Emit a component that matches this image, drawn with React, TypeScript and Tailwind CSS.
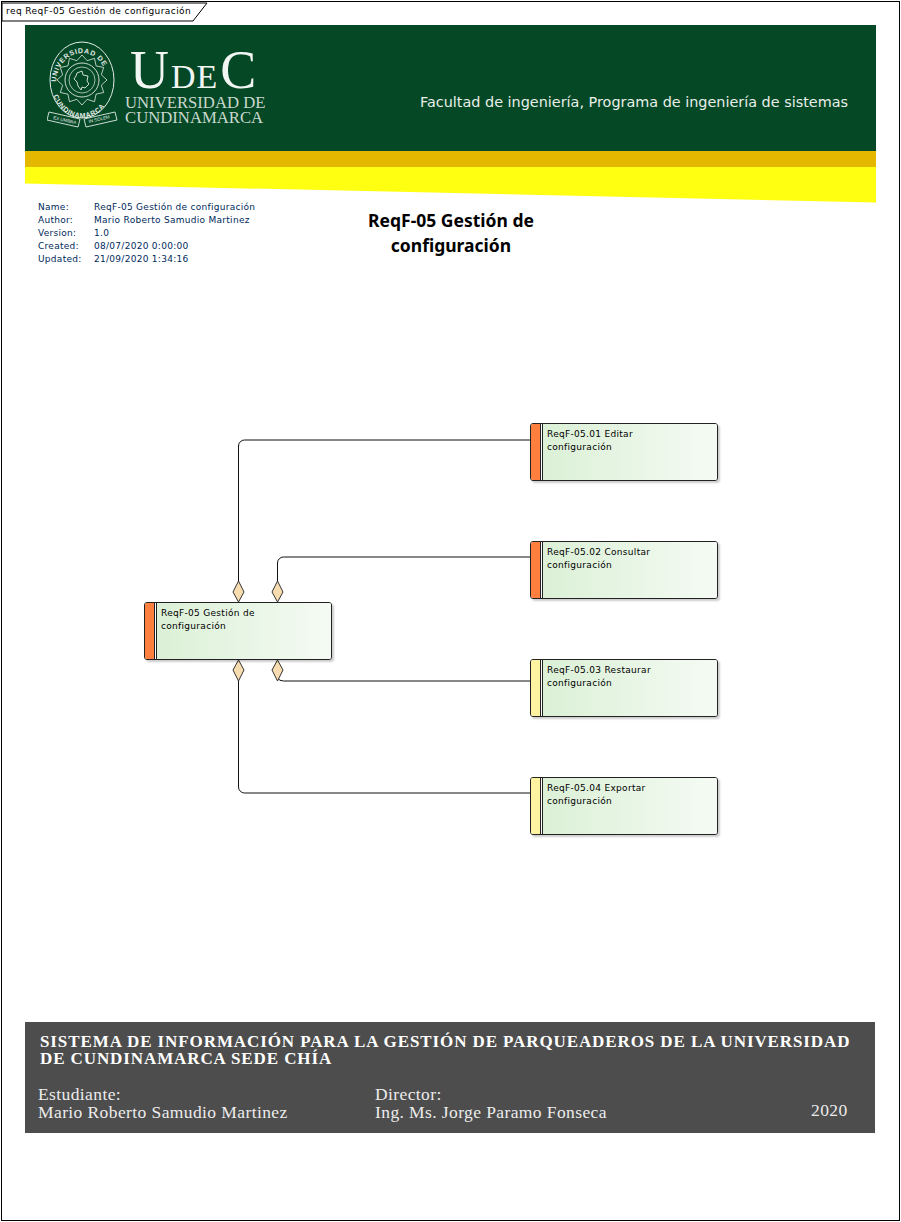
const uiFont = "font-['DejaVu_Sans',sans-serif]";

const requirements = [
  { id: "ReqF-05.01 Editar", strip: "bg-[#ff7f3f]", top: "top-[153px]" },
  { id: "ReqF-05.02 Consultar", strip: "bg-[#ff7f3f]", top: "top-[271px]" },
  { id: "ReqF-05.03 Restaurar", strip: "bg-[#fff3a0]", top: "top-[389px]" },
  { id: "ReqF-05.04 Exportar", strip: "bg-[#fff3a0]", top: "top-[507px]" },
];

const meta = [
  ["Name:", "ReqF-05 Gestión de configuración"],
  ["Author:", "Mario Roberto Samudio Martinez"],
  ["Version:", "1.0"],
  ["Created:", "08/07/2020 0:00:00"],
  ["Updated:", "21/09/2020 1:34:16"],
];

function Seal() {
  const teeth = Array.from({ length: 24 }, (_, i) => {
    const a = (i * Math.PI) / 12;
    const r = i % 2 === 0 ? 25 : 20;
    return `${(35 + r * Math.cos(a)).toFixed(1)},${(40 + r * Math.sin(a)).toFixed(1)}`;
  }).join(" ");
  return (
    <svg width="72" height="96" viewBox="0 0 72 96" className="shrink-0" fill="none" stroke="#e2ebe5">
      <ellipse cx="35" cy="40" rx="32" ry="38" strokeWidth="1" />
      <polygon points={teeth} strokeWidth="0.8" />
      <ellipse cx="35" cy="40" rx="17" ry="17" strokeWidth="0.9" />
      <ellipse cx="35" cy="40" rx="13" ry="13" strokeWidth="0.7" />
      <path d="M30 33l5-2 1 4 5 1-1 5 2 3-4 4-3-1-1 3-3-4-1-4-3-3 2-3z" strokeWidth="0.9" />
      <path id="sealTop" d="M9 44A26 31 0 0 1 61 44" stroke="none" />
      <path id="sealBottom" d="M4 42A31 36 0 0 0 66 42" stroke="none" />
      <text fill="#e2ebe5" stroke="none" fontSize="7" fontWeight="700" fontFamily="Liberation Sans" letterSpacing="0.7">
        <textPath href="#sealTop" startOffset="2">UNIVERSIDAD DE</textPath>
      </text>
      <text fill="#e2ebe5" stroke="none" fontSize="7" fontWeight="700" fontFamily="Liberation Sans" letterSpacing="0.6">
        <textPath href="#sealBottom" startOffset="14">CUNDINAMARCA</textPath>
      </text>
      <polygon points="2,72 33,79 31,87 0,80" fill="#044826" strokeWidth="0.9" />
      <polygon points="37,79 68,72 70,80 39,87" fill="#044826" strokeWidth="0.9" />
      <text x="6" y="79" fill="#e2ebe5" stroke="none" fontSize="4.5" fontFamily="Liberation Sans" transform="rotate(13 6 79)">EX UMBRA</text>
      <text x="42" y="83" fill="#e2ebe5" stroke="none" fontSize="4.5" fontFamily="Liberation Sans" transform="rotate(-13 42 83)">IN SOLEM</text>
    </svg>
  );
}

function Node({ title, strip, className }: { title: string; strip: string; className: string }) {
  return (
    <div className={`absolute flex h-[58px] w-[188px] overflow-hidden rounded-[3px] border border-[#222] bg-white shadow-[2px_2px_2px_rgba(0,0,0,0.2)] ${className}`}>
      <div className={`w-[9px] shrink-0 ${strip}`} />
      <div className="w-[3px] shrink-0 border-x border-[#222] bg-white" />
      <div className={`flex-1 bg-gradient-to-r from-[#dbf0d6] to-[#f5fbf4] pl-1 pt-1 text-[9px] leading-[13px] tracking-[0.3px] text-black ${uiFont}`}>
        <div>{title}</div>
        <div>configuración</div>
      </div>
    </div>
  );
}

function Connectors() {
  const diamonds = [
    "236.5,311 242,322 236.5,332 231,322",
    "275.5,311 281,322 275.5,332 270,322",
    "236.5,390 242,400 236.5,411 231,400",
    "275.5,390 281,400 275.5,411 270,400",
  ];
  return (
    <svg className="absolute left-0 top-0" width="897" height="750" fill="none" stroke="#111" strokeWidth="1">
      <path d="M236.5 311V176a6 6 0 0 1 6-6H530" />
      <path d="M275.5 311V293a6 6 0 0 1 6-6H530" />
      <path d="M275.5 408q2 3 6 3H530" />
      <path d="M236.5 411V517a6 6 0 0 0 6 6H530" />
      {diamonds.map((points) => (
        <polygon key={points} points={points} fill="#f7dcb0" stroke="#333" />
      ))}
    </svg>
  );
}

export default function App() {
  return (
    <div className="relative h-[1222px] w-[901px] bg-white">
      <div className="ml-px mt-px flex h-[1220px] w-[899px] flex-col border border-black pl-[23px] pt-[23px]">
        <header className="w-[851px]">
          <div className="flex h-[126px] items-start bg-[#044826] pl-[22px] pt-[15px]">
            <Seal />
            <div className="ml-[6px] flex flex-col items-start font-['Liberation_Serif',serif] text-[#c9d8ce]">
              <div className="ml-[5px] mt-[10px] flex items-baseline text-[54px] leading-[40px] text-[#f2f6f3]">
                U<span className="mx-[2px] text-[34px] leading-[36px] tracking-[1px]">DE</span>C
              </div>
              <div className="whitespace-nowrap text-[16.7px] leading-[15px]">
                UNIVERSIDAD DE
                <br />
                CUNDINAMARCA
              </div>
            </div>
            <div className={`ml-auto mr-[28px] mt-[52px] text-[14.4px] text-[#e8efe9] ${uiFont}`}>
              Facultad de ingeniería, Programa de ingeniería de sistemas
            </div>
          </div>
          <div className="h-[16px] bg-[#e5b800]" />
          <svg width="851" height="36" className="block">
            <polygon points="0,0 851,0 851,35.5 0,16.5" fill="#ffff12" />
          </svg>
        </header>

        <div className="flex h-[67px] items-start">
          <div className={`mt-[-2px] w-[260px] pl-[13px] text-[9px] leading-[12.9px] tracking-[0.28px] text-[#002a5c] ${uiFont}`}>
            {meta.map(([label, value]) => (
              <div key={label} className="flex">
                <span className="w-[56px] shrink-0">{label}</span>
                <span>{value}</span>
              </div>
            ))}
          </div>
          <h1 className="ml-[63px] mt-[5px] w-[206px] text-center font-['Noto_Sans',sans-serif] text-[17.5px] font-bold leading-[25px] text-black">
            ReqF-05 Gestión de configuración
          </h1>
        </div>

        <div className="relative ml-[-23px] h-[752px] shrink-0">
          <Connectors />
          <Node title="ReqF-05 Gestión de" strip="bg-[#ff7f3f]" className="left-[142px] top-[332px]" />
          {requirements.map((r) => (
            <Node key={r.id} title={r.id} strip={r.strip} className={`left-[528px] ${r.top}`} />
          ))}
        </div>

        <footer className="h-[111px] w-[850px] shrink-0 bg-[#4d4d4d] font-['Liberation_Serif',serif] text-[#ececec]">
          <div className="whitespace-nowrap pl-[15px] pt-[11px] text-[17px] font-bold leading-[17px] tracking-[0.9px] text-white">
            SISTEMA DE INFORMACIÓN PARA LA GESTIÓN DE PARQUEADEROS DE LA UNIVERSIDAD
            <br />
            DE CUNDINAMARCA SEDE CHÍA
          </div>
          <div className="mt-[18px] flex items-end pl-[13px] text-[17.5px] leading-[18px] tracking-[0.4px]">
            <div className="w-[337px]">
              <div>Estudiante:</div>
              <div>Mario Roberto Samudio Martinez</div>
            </div>
            <div className="w-[436px]">
              <div>Director:</div>
              <div>Ing. Ms. Jorge Paramo Fonseca</div>
            </div>
            <div className="mb-[2px]">2020</div>
          </div>
        </footer>
      </div>

      <svg className="absolute left-0 top-0" width="210" height="22" fill="none">
        <path d="M2 2H207L193 20H2Z" fill="#fff" stroke="#000" />
      </svg>
      <div className={`absolute left-[6px] top-[4px] text-[9px] leading-[13px] tracking-[0.42px] text-black ${uiFont}`}>
        req ReqF-05 Gestión de configuración
      </div>
    </div>
  );
}
